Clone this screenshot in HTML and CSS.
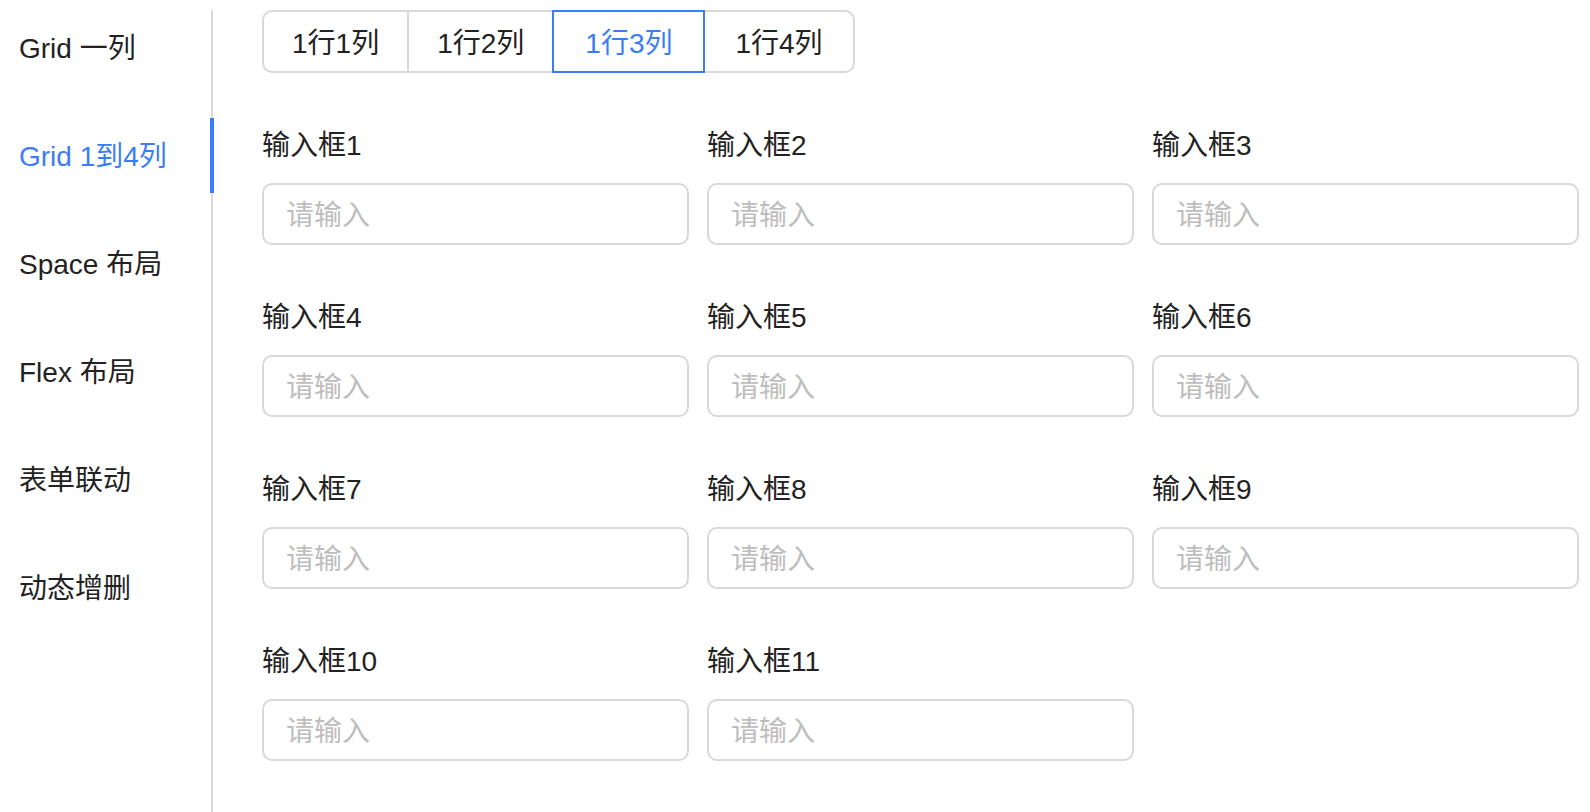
FILE: index.html
```html
<!DOCTYPE html>
<html lang="zh-CN">
<head>
<meta charset="utf-8">
<title>Grid 1到4列</title>
<link rel="stylesheet" href="styles.css">
</head>
<body>
<div class="page">
  <nav class="sidebar">
    <a class="nav-item">Grid 一列</a>
    <a class="nav-item active">Grid 1到4列</a>
    <a class="nav-item">Space 布局</a>
    <a class="nav-item">Flex 布局</a>
    <a class="nav-item">表单联动</a>
    <a class="nav-item">动态增删</a>
  </nav>
  <main class="content">
    <div class="seg">
      <button class="seg-btn first">1行1列</button>
      <button class="seg-btn">1行2列</button>
      <button class="seg-btn active">1行3列</button>
      <button class="seg-btn last">1行4列</button>
    </div>
    <form class="form-grid">
      <div class="field"><label class="field-label">输入框1</label><input class="field-input" placeholder="请输入"></div>
      <div class="field"><label class="field-label">输入框2</label><input class="field-input" placeholder="请输入"></div>
      <div class="field"><label class="field-label">输入框3</label><input class="field-input" placeholder="请输入"></div>
      <div class="field"><label class="field-label">输入框4</label><input class="field-input" placeholder="请输入"></div>
      <div class="field"><label class="field-label">输入框5</label><input class="field-input" placeholder="请输入"></div>
      <div class="field"><label class="field-label">输入框6</label><input class="field-input" placeholder="请输入"></div>
      <div class="field"><label class="field-label">输入框7</label><input class="field-input" placeholder="请输入"></div>
      <div class="field"><label class="field-label">输入框8</label><input class="field-input" placeholder="请输入"></div>
      <div class="field"><label class="field-label">输入框9</label><input class="field-input" placeholder="请输入"></div>
      <div class="field"><label class="field-label">输入框10</label><input class="field-input" placeholder="请输入"></div>
      <div class="field"><label class="field-label">输入框11</label><input class="field-input" placeholder="请输入"></div>
    </form>
  </main>
</div>
</body>
</html>
```

FILE: styles.css
```css
html, body {
  margin: 0;
  padding: 0;
  background: #ffffff;
}

body {
  font-family: "Liberation Sans", "Noto Sans CJK SC", sans-serif;
  font-size: 28px;
  color: #222222;
}

.page {
  display: flex;
  height: 812px;
  box-sizing: border-box;
  padding: 10px 11px 0 0;
  overflow: hidden;
}

.sidebar {
  width: 213px;
  flex: none;
  box-sizing: border-box;
  border-right: 2px solid #dadada;
  padding-left: 19px;
  display: flex;
  flex-direction: column;
}

.nav-item {
  position: relative;
  height: 75px;
  box-sizing: border-box;
  padding-bottom: 4px;
  margin-bottom: 33px;
  display: flex;
  align-items: center;
  color: #222222;
  white-space: nowrap;
}

.nav-item.active {
  color: #3b7df6;
}

.nav-item.active::after {
  content: "";
  position: absolute;
  right: -3px;
  top: 0;
  width: 4px;
  height: 75px;
  background: #3b7df6;
}

.content {
  flex: 1;
  padding-left: 49px;
  min-width: 0;
}

.seg {
  display: flex;
  margin-bottom: 50px;
}

.seg-btn {
  position: relative;
  height: 63px;
  box-sizing: border-box;
  padding: 4px 28px 0;
  margin: 0 0 0 -2px;
  border: 2px solid #d9d9d9;
  background: #ffffff;
  font-family: inherit;
  font-size: 28px;
  color: #222222;
  line-height: 1;
}

.seg-btn.first {
  margin-left: 0;
  border-radius: 10px 0 0 10px;
}

.seg-btn.last {
  padding: 4px 30px 0;
  border-radius: 0 10px 10px 0;
}

.seg-btn.active {
  z-index: 1;
  padding: 4px 31px 0;
  border-color: #3b7df6;
  color: #3b7df6;
}

.form-grid {
  display: grid;
  grid-template-columns: repeat(3, 1fr);
  column-gap: 18px;
  row-gap: 50px;
  margin: 0;
}

.field {
  display: flex;
  flex-direction: column;
  min-width: 0;
}

.field-label {
  height: 40px;
  line-height: 40px;
  padding-top: 3px;
  margin-bottom: 17px;
  white-space: nowrap;
}

.field-input {
  height: 62px;
  box-sizing: border-box;
  border: 2px solid #d9d9d9;
  border-radius: 10px;
  padding: 3px 22px 0;
  font-family: inherit;
  font-size: 28px;
  color: #222222;
  background: #ffffff;
  outline: none;
  width: 100%;
}

.field-input::placeholder {
  color: #bdbdbd;
}
```
